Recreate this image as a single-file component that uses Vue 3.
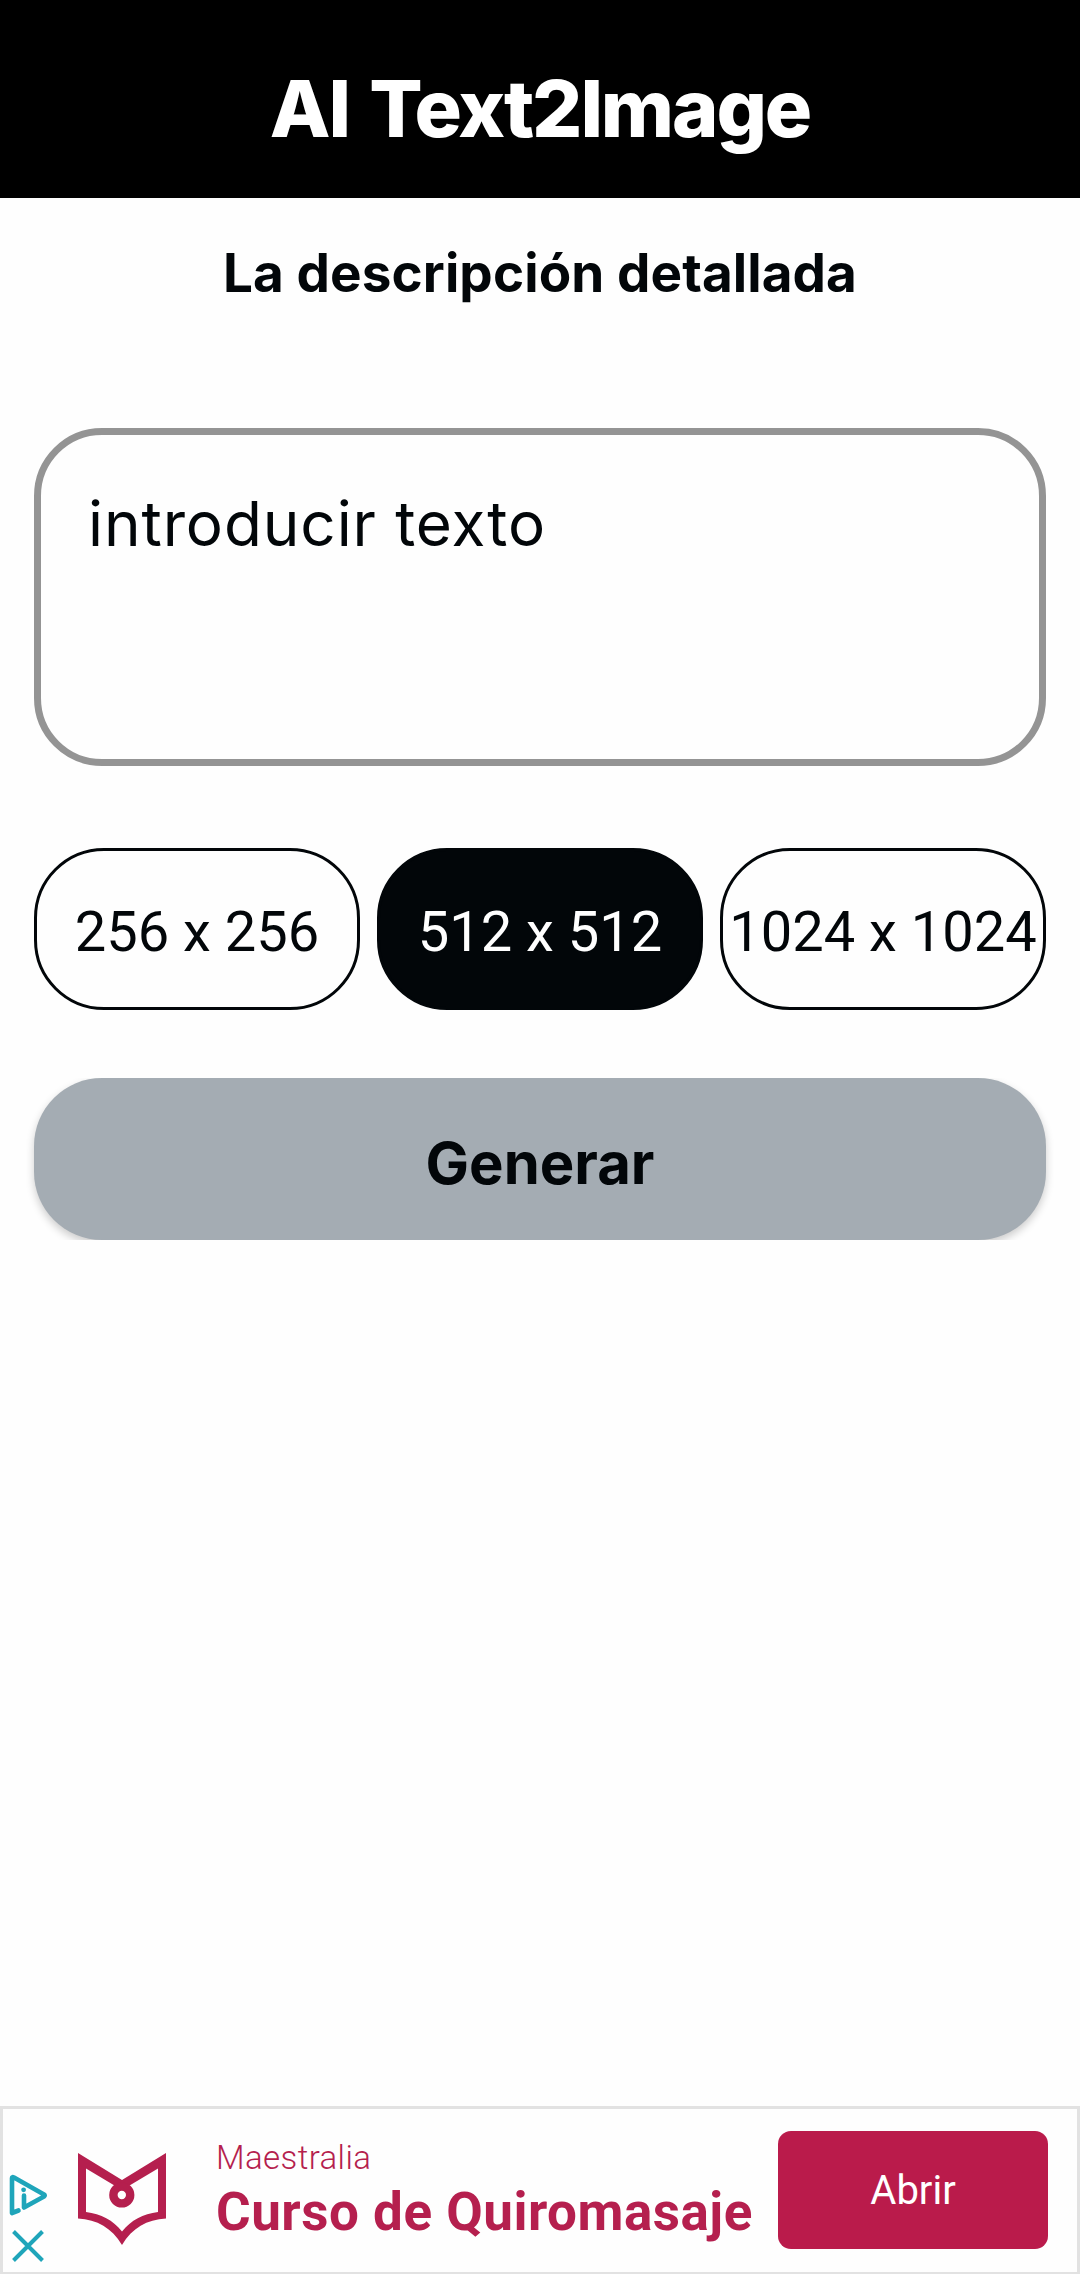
<template>
  <div class="page">
    <header class="app-bar">
      <h1 class="app-title">AI Text2Image</h1>
    </header>

    <main class="content">
      <h2 class="subtitle">La descripción detallada</h2>

      <textarea v-model="prompt" class="prompt" placeholder="introducir texto"></textarea>

      <div class="sizes">
        <button
          v-for="size in sizes"
          :key="size"
          class="size-btn"
          :class="{ active: size === selected }"
          @click="selected = size"
        >{{ size }} x {{ size }}</button>
      </div>

      <div class="generate-wrap">
        <button class="generate">Generar</button>
      </div>
    </main>

    <!-- ad banner -->
    <footer class="ad">
      <div class="ad-marks">
        <svg width="40" height="42" viewBox="0 0 40 42" fill="none" stroke="#1fa5ba" stroke-linecap="round" stroke-linejoin="round">
          <path d="M10.5 36.5 L4 39 V4 Q4 2.500 6 3.500 L36 20.500 Q37.500 21.500 36 22.500 L16 33.500 V21.500" stroke-width="4.6" />
          <circle cx="15.6" cy="15.8" r="2.4" fill="#1fa5ba" stroke="none" />
        </svg>
        <svg width="32" height="32" viewBox="0 0 32 32">
          <path d="M1.5 1.5 L30.5 30.5 M30.5 1.5 L1.5 30.5" stroke="#1fa5ba" stroke-width="4" />
        </svg>
      </div>

      <svg class="ad-logo" width="88" height="92" viewBox="0 0 88 92">
        <path
          fill="#b51f4e"
          fill-rule="evenodd"
          d="M0 0 L44 27 L88 0 V65.5 C69 66.500 54 75 44 92 C34 75 19 66.500 0 65.500 Z
             M8 15.500 V59 C23 61 35 67 44 78.500 C53 67 65 61 80 59 V15.500 L44 37 Z"
        />
        <circle cx="43.800" cy="42" r="8.400" fill="#fff" stroke="#b51f4e" stroke-width="8.400" />
      </svg>

      <div class="ad-text">
        <span class="ad-brand">Maestralia</span>
        <span class="ad-headline">Curso de Quiromasaje</span>
      </div>

      <button class="ad-open">Abrir</button>
    </footer>
  </div>
</template>

<script setup>
import { ref } from 'vue'

const prompt = ref('')
const sizes = [256, 512, 1024]
const selected = ref(512)
</script>

<style>
body {
  margin: 0;
  background: #fefefe;
}
</style>

<style scoped>
.page {
  display: flex;
  flex-direction: column;
  height: 2274px;
  overflow: hidden;
  background: #fefefe;
  color: #020609;
  font-family: Inter, 'Liberation Sans', sans-serif;
}

button {
  border: none;
  padding: 0;
  font-family: inherit;
  color: inherit;
  white-space: nowrap;
}

.app-bar {
  box-sizing: border-box;
  height: 198px;
  padding-top: 58px;
  background: #000;
  flex-shrink: 0;
}

.app-title {
  margin: 0;
  font-size: 79px;
  line-height: 100px;
  font-weight: 800;
  letter-spacing: -2.1px;
  word-spacing: 5px;
  text-align: center;
  color: #fff;
}

.content {
  flex: 1;
  display: flex;
  flex-direction: column;
  padding: 43px 34px 0;
}

.subtitle {
  margin: 0 0 123px;
  font-size: 53px;
  line-height: 64px;
  font-weight: 700;
  letter-spacing: 0.1px;
  text-align: center;
}

.prompt {
  box-sizing: border-box;
  width: 100%;
  height: 338px;
  padding: 51px 47px;
  border: 7px solid #949494;
  border-radius: 68px;
  background: transparent;
  resize: none;
  outline: none;
  font-family: inherit;
  font-size: 62px;
  line-height: 76px;
  letter-spacing: 0.9px;
  color: #020609;
}

.prompt::placeholder {
  color: #020609;
  opacity: 1;
}

.sizes {
  display: flex;
  gap: 17px;
  margin-top: 82px;
}

.size-btn {
  flex: 1 1 0;
  min-width: 0;
  height: 162px;
  padding-top: 5px;
  border: 3px solid #020609;
  border-radius: 70px;
  background: transparent;
  font-family: Roboto, sans-serif;
  font-size: 56px;
}

.size-btn.active {
  background: #020609;
  color: #fff;
}

/* clips the shadow below the button */
.generate-wrap {
  margin: 68px -34px 0;
  padding: 0 34px;
  overflow: hidden;
}

.generate {
  display: block;
  width: 100%;
  height: 162px;
  padding-top: 8px;
  border-radius: 68px;
  background: #a4acb3;
  box-shadow: 0 4px 9px rgba(0, 0, 0, 0.2);
  font-size: 58px;
  font-weight: 700;
}

.ad {
  box-sizing: border-box;
  display: flex;
  align-items: flex-start;
  height: 168px;
  border: 3px solid #e2e2e2;
  border-bottom-width: 2px;
  background: #fefefe;
  font-family: Roboto, sans-serif;
  flex-shrink: 0;
}

.ad-marks {
  display: flex;
  flex-direction: column;
  align-items: center;
  gap: 14px;
  width: 40px;
  padding: 65px 0 0 5px;
}

.ad-logo {
  margin: 44px 0 0 30px;
  flex-shrink: 0;
}

.ad-text {
  display: flex;
  flex-direction: column;
  width: 562px;
  margin: 29px 0 0 50px;
  color: #b51f4e;
  white-space: nowrap;
  flex-shrink: 0;
}

.ad-brand {
  font-size: 33px;
  line-height: 40px;
  font-weight: 300;
  letter-spacing: 0.4px;
}

.ad-headline {
  margin-top: 3px;
  font-size: 53px;
  line-height: 62px;
  font-weight: 700;
  letter-spacing: 0.5px;
}

.ad-open {
  width: 270px;
  height: 118px;
  margin-top: 22px;
  border-radius: 13px;
  background: #ba1b4b;
  color: #fff;
  font-size: 40px;
  flex-shrink: 0;
}
</style>
